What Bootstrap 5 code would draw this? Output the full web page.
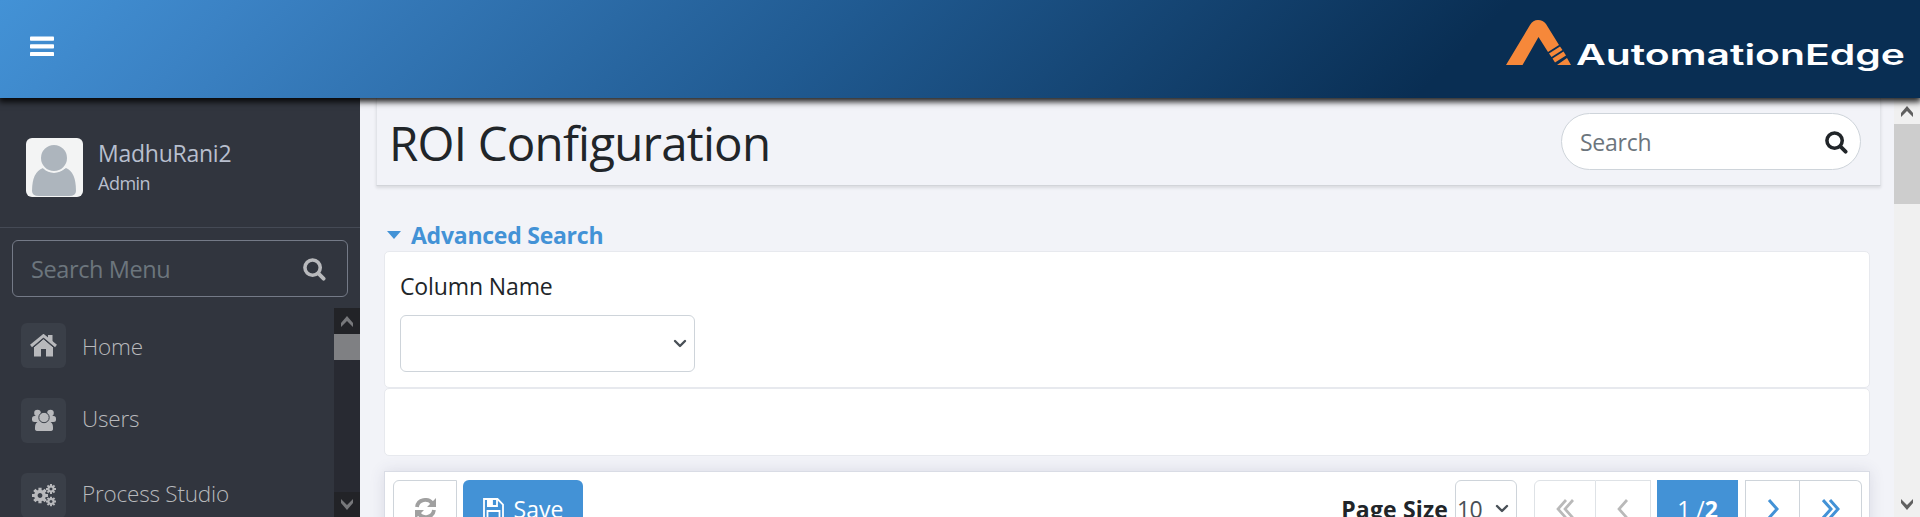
<!DOCTYPE html>
<html lang="en">
<head>
<meta charset="utf-8">
<meta name="viewport" content="width=device-width, initial-scale=1">
<title>ROI Configuration</title>
<link href="https://cdn.jsdelivr.net/npm/bootstrap@5.3.0/dist/css/bootstrap.min.css" rel="stylesheet">
<style>
body{font-family:"Open Sans","Noto Sans",sans-serif;font-size:23px;line-height:1.5;background:#f2f3f8;color:#212529;height:517px;overflow:hidden}
svg{display:block;flex:none}
.topbar{height:98px;background:linear-gradient(135deg,#4392d6 0%,#3b82c4 12%,#205a91 43%,#092e53 75%,#092e53 100%);box-shadow:0 3px 6px 1px rgba(0,0,0,.85);z-index:5}
.topbar .brand-mark{margin:17px 14px 0 0}
.shell{height:419px}
.side{width:360px;background:#31353e;color:#b8bfce}
.profile{height:130px;flex:none;padding:40px 0 0 26px;border-bottom:1px solid #454a55}
.avatar{width:57px;height:59px;border-radius:6px;background:#f3f4f4;overflow:hidden}
.profile .who{margin-left:15px;line-height:1}
.who .user-name{font-size:23px;letter-spacing:-.25px;margin-top:4px}
.who .user-role{font-size:18px;letter-spacing:-.5px;margin-top:9px}
.menu-search{width:336px;height:57px;flex:none;margin:12px 12px 11px;border:1px solid #747a87;border-radius:6px;padding:2px 21px 0 18px;color:#6c757d;font-size:23.5px;letter-spacing:-.4px}
.menu-item{height:45px;margin:0 0 30px 21px;color:#b8b9bc;font-weight:300;font-size:22.5px}
.tile{width:45px;height:45px;border-radius:6px;background:#3a3f48;color:#b8b9bc;margin-right:16px}
.menu-item span{padding-top:3px;letter-spacing:-.2px}
.menu-rail{width:26px;background:#282a32}
.rail-btn{height:26px;background:#222327}
.menu-rail .thumb{height:26px;background:#7f8083}
.page-rail{width:26px;background:#f0f0f0}
.page-rail .thumb{height:80px;background:#cdcdcd}
.page-rail .end,.menu-rail .end{height:25px}
.content-area{padding:0 13px 0 16px}
.title-bar{height:88px;border:1px solid #e2e4e9;border-top:0;border-bottom-color:#d2d4d9;box-shadow:0 2px 3px rgba(0,0,0,.1);padding:0 19px 0 12px}
.title-bar h1{font-size:47.5px;font-weight:400;line-height:1;letter-spacing:-.8px;margin:21px 0 0}
.pill{width:300px;height:57px;margin-top:15px;border:1px solid #ced4da;border-radius:29px;background:#fff;color:#6c757d;padding:2px 12px 0 18px;letter-spacing:-.25px}
.panels{padding:0 11px 0 8px}
.adv{height:65px;color:#4392d6;font-weight:700;font-size:23px;line-height:30px;letter-spacing:-.25px;padding:32px 0 0 3px}
.panel{background:#fff;border:1px solid #e7e9ee;border-radius:5px}
.panel-a{height:137px;padding:15px 15px}
.panel-a .caption{line-height:38px;height:48px;letter-spacing:-.12px}
.panel-a .form-select{width:295px;height:57px;border:1px solid #ced4da;border-radius:6px;background:#fff;padding:0 7px}
.panel-b{height:68px}
.grid-panel{height:70px;margin-top:15px;background:#fff;border:1px solid #d9dce5;box-shadow:0 0 14px rgba(60,65,100,.13);padding:8px 7px 8px 8px}
.tool{height:57px;border:1px solid #ced4da;background:#fff}
.rounded-start{border-radius:6px 0 0 6px!important}
.rounded-end{border-radius:0 6px 6px 0!important}
.tool span{padding-top:2px}
.save{width:120px;background:#4392d6;border:0;color:#fff;border-radius:6px;margin-left:6px;gap:10px;font-size:23px}
.size{width:62px;margin:0 17px 0 7px;border-radius:6px;color:#495057;padding:0 7px 0 1px;letter-spacing:-.7px}
.pgbtn{color:#4392d6}
.off{color:#b9b9b9;border-color:#dee2e6}
.cur{width:81px;border:0;background:#4392d6;color:#fff;margin:0 7px 0 6px}
</style>
</head>
<body>
<svg width="0" height="0" class="position-absolute">
  <symbol id="lens" viewBox="0 0 24 24"><g fill="none" stroke="currentColor"><circle cx="10" cy="10" r="8" stroke-width="3.7"/><path d="M16 16l5.5 5.500" stroke-width="4" stroke-linecap="round"/></g></symbol>
  <symbol id="up" viewBox="0 0 12 11"><path d="M0 7V11L6 5l6 6V7L6 0z" fill="currentColor"/></symbol>
  <symbol id="down" viewBox="0 0 12 11"><path d="M0 4V0l6 6 6-6v4L6 11z" fill="currentColor"/></symbol>
  <symbol id="chev" viewBox="0 0 14 10"><path d="M2 2l5 5 5-5" fill="none" stroke="#495057" stroke-width="2.4" stroke-linecap="round" stroke-linejoin="round"/></symbol>
  <symbol id="cog" viewBox="-12 -12 24 24"><circle r="6.200" fill="none" stroke="currentColor" stroke-width="5.200"/><g stroke="currentColor" stroke-width="4.800"><path d="M0-7v-5M0 7v5M-7 0h-5M7 0h5M5-5l3.500-3.500M-5 5l-3.500 3.500M-5-5l-3.500-3.500M5 5l3.500 3.500"/></g></symbol>
</svg>
<header class="topbar d-flex justify-content-between position-relative">
  <svg width="24" height="20" style="margin:36px 0 0 30px" fill="#fff"><rect y=".5" width="24" height="4.300" rx=".8"/><rect y="8.300" width="24" height="4.300" rx=".8"/><rect y="16" width="24" height="4.200" rx=".8"/></svg>
  <svg class="brand-mark" width="401" height="62" viewBox="0 0 401 62">
    <path d="M1 48L25 8Q28 3 33 3Q38 3 41 7L54 28 43 35 33.500 20 17.500 48Z" fill="#f6883a"/>
    <path d="M44 36.500L55 29.500 57.500 33 46.500 40ZM47.500 41.500L58.500 34.500 61 38.500 50 45.500ZM52 48L62 41 66 48Z" fill="#f6883a"/>
    <text x="71" y="47.500" fill="#fff" font-family="Inter,sans-serif" font-size="28.500" font-weight="600" textLength="329" lengthAdjust="spacingAndGlyphs">AutomationEdge</text>
  </svg>
</header>
<div class="shell d-flex">
  <aside class="side d-flex flex-column flex-shrink-0">
    <div class="profile d-flex">
      <div class="avatar"><svg width="57" height="59"><g fill="#adb5bd"><path d="M6 53Q6 34 17 30Q28 38 40 30Q50 34 50 53Q50 58 43 58H13Q6 58 6 53Z"/><circle cx="28" cy="20" r="14" stroke="#f3f4f4" stroke-width="2"/></g></svg></div>
      <div class="who"><div class="user-name">MadhuRani2</div><div class="user-role">Admin</div></div>
    </div>
    <div class="menu-search d-flex align-items-center justify-content-between"><span>Search Menu</span><svg width="23" height="23" color="#b8b9bc"><use href="#lens"/></svg></div>
    <div class="d-flex flex-grow-1 overflow-hidden">
      <nav class="flex-grow-1" style="padding-top:15px">
        <div class="menu-item d-flex align-items-center"><div class="tile d-flex align-items-center justify-content-center"><svg width="27" height="23" viewBox="0 0 27 23"><path d="M1 12L13.500 1.700 26 12" fill="none" stroke="currentColor" stroke-width="3"/><path d="M18 1h4.500v8L18 5.500zM4 13l9.500-8L23 13v9.500h-7V15h-5v7.500H4z" fill="currentColor"/><path d="M3 13.700l10.500-9 10.500 9" fill="none" stroke="#3a3f48"/></svg></div><span>Home</span></div>
        <div class="menu-item d-flex align-items-center"><div class="tile d-flex align-items-center justify-content-center"><svg width="24" height="23" viewBox="0 0 24 23" fill="currentColor"><circle cx="5.500" cy="4" r="3.300"/><circle cx="18.500" cy="4" r="3.300"/><rect y="7" width="9" height="6" rx="2.500"/><rect x="15" y="7" width="9" height="6" rx="2.500"/><path d="M3 22V18Q3 13 8 12H16Q21 13 21 18V20Q21 22 18 22H6Q3 22 3 20Z"/><circle cx="12" cy="8.500" r="5.200" stroke="#3a3f48"/></svg></div><span class="pt-0 pb-1">Users</span></div>
        <div class="menu-item d-flex align-items-center"><div class="tile d-flex align-items-center justify-content-center"><svg width="24" height="23" viewBox="0 0 24 23"><use href="#cog" x="0" y="3.500" width="16" height="16"/><use href="#cog" x="14" y="0" width="10" height="10"/><use href="#cog" x="14" y="12.500" width="10" height="10"/></svg></div><span class="pt-0 pb-1">Process Studio</span></div>
      </nav>
      <div class="menu-rail d-flex flex-column"><div class="rail-btn d-flex align-items-center justify-content-center"><svg width="12" height="11" color="#77787b"><use href="#up"/></svg></div><div class="thumb"></div><div class="rail-btn end mt-auto d-flex align-items-center justify-content-center"><svg width="12" height="11" color="#77787b"><use href="#down"/></svg></div></div>
    </div>
  </aside>
  <main class="content-area flex-grow-1">
    <div class="title-bar d-flex justify-content-between"><h1>ROI Configuration</h1><div class="pill d-flex align-items-center justify-content-between"><span>Search</span><svg width="23" height="23" color="#212529"><use href="#lens"/></svg></div></div>
    <div class="panels">
      <div class="adv d-flex align-items-center"><svg width="14" height="8" style="margin-right:10px"><path d="M0 0h14L7 8z" fill="currentColor"/></svg><span>Advanced Search</span></div>
      <section class="panel panel-a"><div class="caption">Column Name</div><div class="form-select d-flex align-items-center justify-content-end"><svg width="14" height="10"><use href="#chev"/></svg></div></section>
      <section class="panel panel-b"></section>
      <section class="grid-panel d-flex">
        <div class="tool rounded-start d-flex align-items-center justify-content-center" style="width:64px"><svg width="21" height="21" viewBox="0 0 21 21"><g fill="none" stroke="#a0a0a0" stroke-width="3.800"><path d="M2 9C3 1 13 0 17 5M19 12c-1 8-11 9-15 4"/></g><path d="M21 0v9h-9zM0 21v-9h9z" fill="#a0a0a0"/></svg></div>
        <div class="tool save d-flex align-items-center justify-content-center"><svg width="21" height="21" viewBox="0 0 21 21" fill="none" stroke="#fff" stroke-width="1.800"><path d="M1 1h13.500L20 6.500V20H1zM4.500 20v-7h12v7"/><path d="M5 1v7h9V1z"/><path d="M5 1h4v7H5z" fill="#fff"/></svg><span>Save</span></div>
        <div class="ms-auto d-flex align-items-center" style="height:57px"><b style="letter-spacing:.15px;padding-top:2px">Page Size</b>
          <div class="tool size d-flex align-items-center justify-content-between"><span>10</span><svg width="14" height="10"><use href="#chev"/></svg></div>
          <div class="tool pgbtn off rounded-start d-flex align-items-center justify-content-center" style="width:62px"><svg width="18" height="20" fill="none" stroke="currentColor" stroke-width="2.700"><path d="M10 1L2 10l8 9M17 1l-8 9 8 9"/></svg></div>
          <div class="tool pgbtn off border-start-0 d-flex align-items-center justify-content-center" style="width:55px"><svg width="12" height="20" fill="none" stroke="currentColor" stroke-width="2.700"><path d="M10 1L2 10l8 9"/></svg></div>
          <div class="tool cur d-flex align-items-center justify-content-center"><span>1 /<b>2</b></span></div>
          <div class="tool pgbtn d-flex align-items-center justify-content-center" style="width:55px"><svg width="12" height="20" fill="none" stroke="currentColor" stroke-width="3"><path d="M2 1l8 9-8 9"/></svg></div>
          <div class="tool pgbtn border-start-0 rounded-end d-flex align-items-center justify-content-center" style="width:62px"><svg width="18" height="20" fill="none" stroke="currentColor" stroke-width="3"><path d="M1 1l8 9-8 9M8 1l8 9-8 9"/></svg></div>
        </div>
      </section>
    </div>
  </main>
  <div class="page-rail d-flex flex-column align-items-stretch"><div class="d-flex align-items-center justify-content-center" style="height:26px"><svg width="12" height="11" color="#606060"><use href="#up"/></svg></div><div class="thumb"></div><div class="end mt-auto d-flex align-items-center justify-content-center"><svg width="12" height="11" color="#606060"><use href="#down"/></svg></div></div>
</div>
<script src="https://cdn.jsdelivr.net/npm/bootstrap@5.3.0/dist/js/bootstrap.bundle.min.js"></script>
</body>
</html>
